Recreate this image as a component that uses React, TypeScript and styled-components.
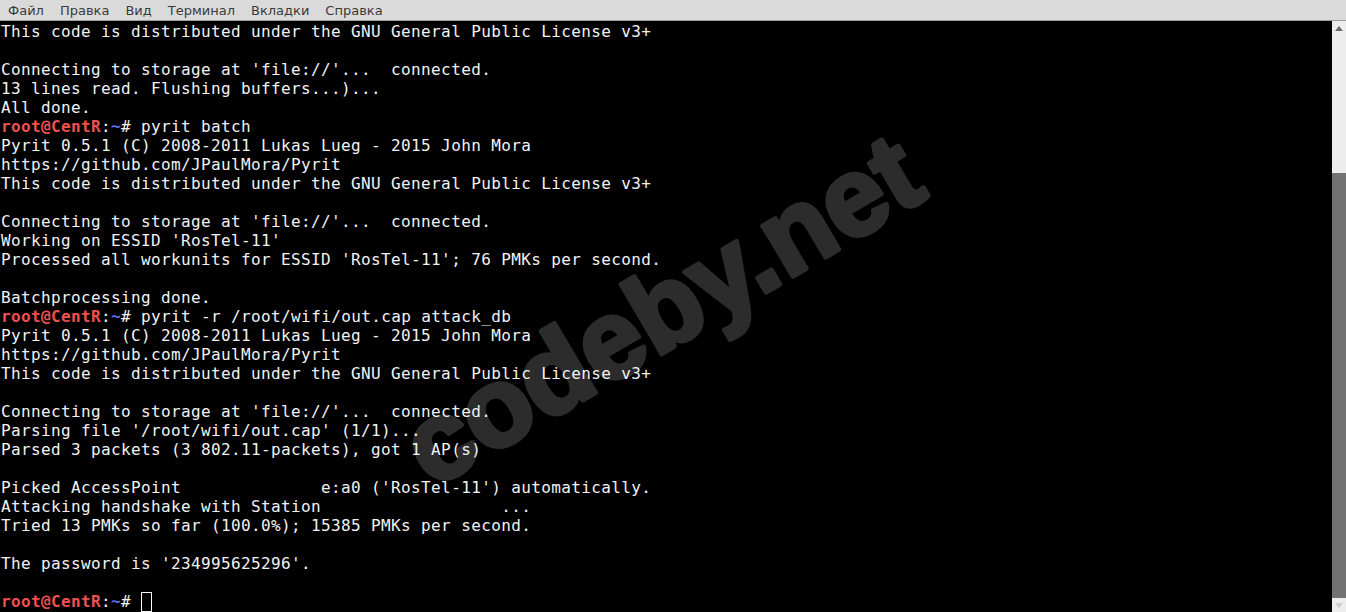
import React from "react";
import styled, { createGlobalStyle } from "styled-components";

const Global = createGlobalStyle`
  html, body { margin: 0; padding: 0; background: #000; overflow: hidden; }
  #root { width: 1346px; height: 612px; }
`;

const Window = styled.div`
  width: 1346px;
  height: 612px;
  display: flex;
  flex-direction: column;
  background: #000;
`;

const MenuBar = styled.div`
  height: 20px;
  flex: none;
  display: flex;
  align-items: center;
  background: #dadada;
  border-bottom: 1px solid #9c9c9c;
  font-family: "DejaVu Sans", sans-serif;
  font-size: 13px;
  color: #3a3a3a;
`;

const MenuItem = styled.span`
  padding: 2px 8px 0;
  line-height: 18px;
`;

const Body = styled.div`
  flex: 1;
  display: flex;
  min-height: 0;
`;

const Terminal = styled.div`
  flex: 1;
  position: relative;
  overflow: hidden;
  background: #000;
`;

const Lines = styled.pre`
  position: relative;
  z-index: 1;
  margin: 0;
  padding: 1px 0 0 1px;
  font-family: "DejaVu Sans Mono", monospace;
  font-size: 16px;
  letter-spacing: 0.37px;
  line-height: 19px;
  color: #f2f2f2;
  white-space: pre;
`;

const Line = styled.div`
  height: 19px;
`;

const User = styled.span`
  color: #ef5050;
  font-weight: bold;
`;

const Tilde = styled.span`
  color: #5c6cff;
  font-weight: bold;
`;

const Cursor = styled.span`
  display: inline-block;
  width: 9px;
  height: 18px;
  border: 1px solid #fff;
  vertical-align: top;
  box-sizing: content-box;
`;

const Watermark = styled.svg`
  position: absolute;
  left: 0;
  top: 0;
  z-index: 0;
  pointer-events: none;
`;

const Scrollbar = styled.div`
  width: 14px;
  flex: none;
  display: flex;
  flex-direction: column;
  background: #ededed;
`;

const ArrowBox = styled.div`
  height: 14px;
  flex: none;
  display: flex;
  align-items: center;
  justify-content: center;
`;

const Track = styled.div`
  flex: 1;
  display: flex;
  flex-direction: column;
`;

const TrackSpace = styled.div<{ $h: number }>`
  height: ${(p) => p.$h}px;
  flex: none;
`;

const Thumb = styled.div`
  flex: 1;
  background: #727272;
`;

const Prompt: React.FC<{ cmd?: string; cursor?: boolean }> = ({ cmd, cursor }) => (
  <Line>
    <User>root@CentR</User>:<Tilde>~</Tilde># {cmd}
    {cursor && <Cursor />}
  </Line>
);

const T: React.FC<{ children?: React.ReactNode }> = ({ children }) => <Line>{children}</Line>;

export default function App() {
  const lic = "This code is distributed under the GNU General Public License v3+";
  const conn = "Connecting to storage at 'file://'...  connected.";
  const pyr = "Pyrit 0.5.1 (C) 2008-2011 Lukas Lueg - 2015 John Mora";
  const gh = "https://github.com/JPaulMora/Pyrit";
  return (
    <Window>
      <Global />
      <MenuBar>
        <MenuItem>Файл</MenuItem>
        <MenuItem>Правка</MenuItem>
        <MenuItem>Вид</MenuItem>
        <MenuItem>Терминал</MenuItem>
        <MenuItem>Вкладки</MenuItem>
        <MenuItem>Справка</MenuItem>
      </MenuBar>
      <Body>
        <Terminal>
          <Watermark width="1332" height="591" viewBox="0 0 1332 591">
            <text
              x="432"
              y="468"
              transform="rotate(-30.5 432 468)"
              fontFamily="'Liberation Sans', Arial, sans-serif"
              fontWeight="bold"
              fontSize="111"
              fill="#2c2c2c"
              stroke="#2c2c2c"
              strokeWidth="5"
              strokeLinejoin="round"
            >
              codeby.net
            </text>
          </Watermark>
          <Lines>
            <T>{lic}</T>
            <T />
            <T>{conn}</T>
            <T>13 lines read. Flushing buffers...)...</T>
            <T>All done.</T>
            <Prompt cmd="pyrit batch" />
            <T>{pyr}</T>
            <T>{gh}</T>
            <T>{lic}</T>
            <T />
            <T>{conn}</T>
            <T>Working on ESSID 'RosTel-11'</T>
            <T>Processed all workunits for ESSID 'RosTel-11'; 76 PMKs per second.</T>
            <T />
            <T>Batchprocessing done.</T>
            <Prompt cmd="pyrit -r /root/wifi/out.cap attack_db" />
            <T>{pyr}</T>
            <T>{gh}</T>
            <T>{lic}</T>
            <T />
            <T>{conn}</T>
            <T>Parsing file '/root/wifi/out.cap' (1/1)...</T>
            <T>Parsed 3 packets (3 802.11-packets), got 1 AP(s)</T>
            <T />
            <T>{"Picked AccessPoint              e:a0 ('RosTel-11') automatically."}</T>
            <T>{"Attacking handshake with Station                  ..."}</T>
            <T>Tried 13 PMKs so far (100.0%); 15385 PMKs per second.</T>
            <T />
            <T>The password is '234995625296'.</T>
            <T />
            <Prompt cursor />
          </Lines>
        </Terminal>
        <Scrollbar>
          <ArrowBox>
            <svg width="8" height="5" viewBox="0 0 8 5">
              <path d="M0 5 L4 0 L8 5 Z" fill="#6a6a6a" />
            </svg>
          </ArrowBox>
          <Track>
            <TrackSpace $h={138} />
            <Thumb />
          </Track>
          <ArrowBox>
            <svg width="8" height="5" viewBox="0 0 8 5">
              <path d="M0 0 L8 0 L4 5 Z" fill="#cfcfcf" />
            </svg>
          </ArrowBox>
        </Scrollbar>
      </Body>
    </Window>
  );
}
